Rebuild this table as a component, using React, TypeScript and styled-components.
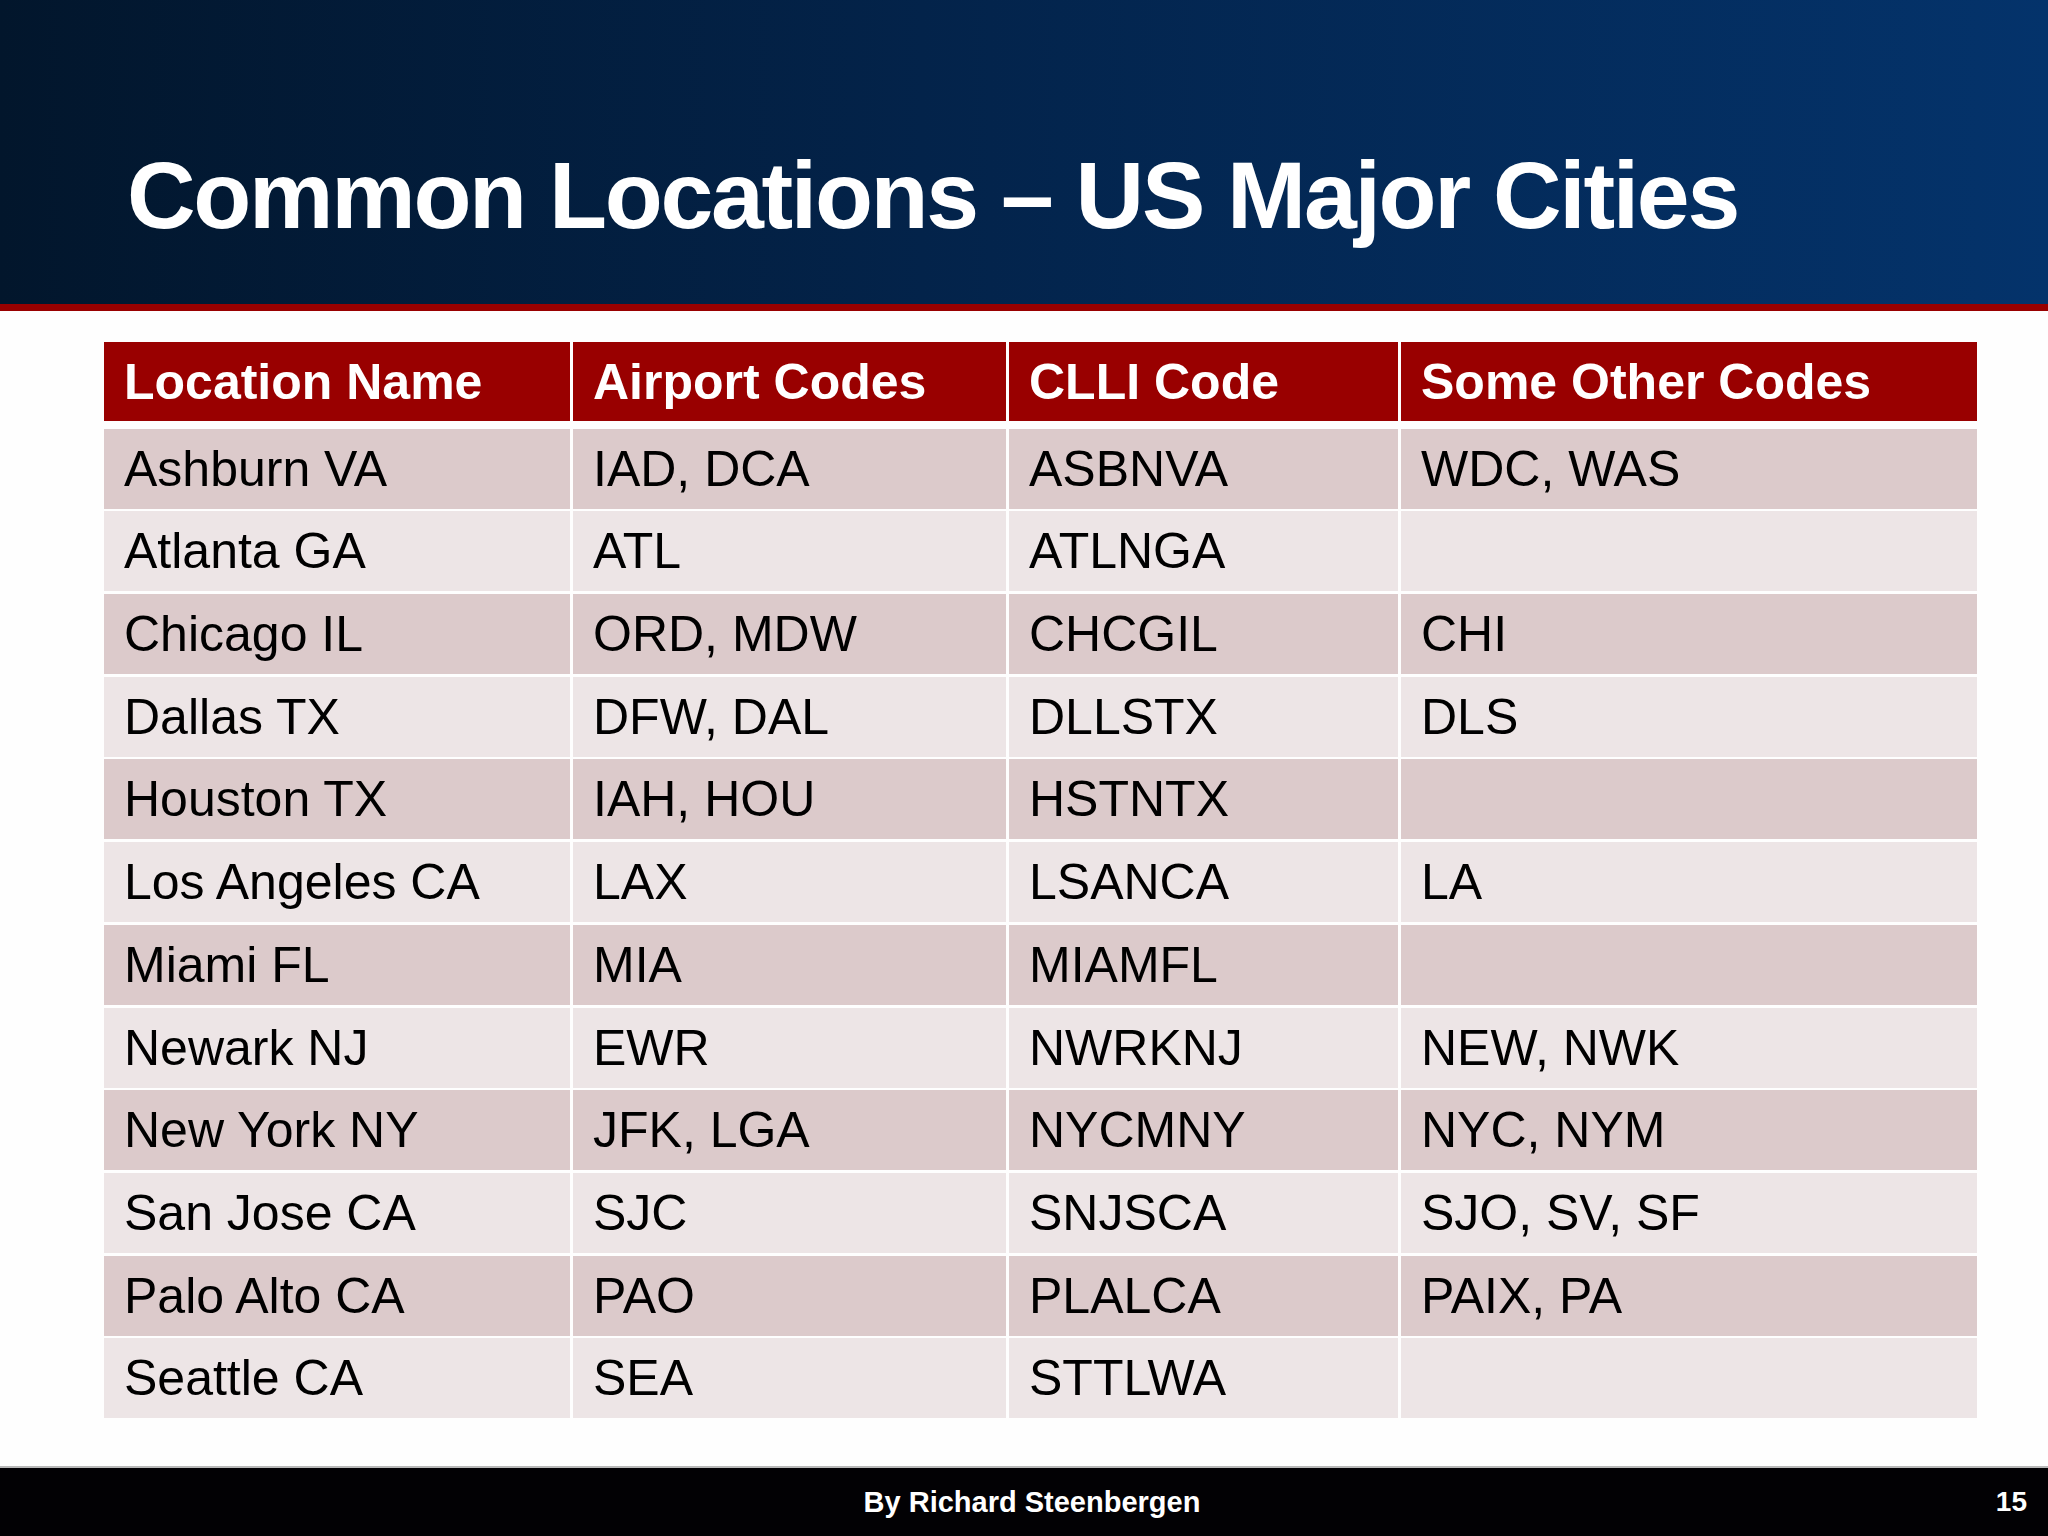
import { createGlobalStyle } from "styled-components"
import styled from "styled-components"

const GlobalStyle = createGlobalStyle`
  html, body {
    margin: 0;
    padding: 0;
    background: #ffffff;
  }
  body {
    font-family: "Liberation Sans", Arial, sans-serif;
  }
`

const Slide = styled.div`
  width: 2048px;
  height: 1536px;
  display: flex;
  flex-direction: column;
  background: #fefefe;
  overflow: hidden;
`

const TitleBar = styled.header`
  height: 311px;
  box-sizing: border-box;
  padding: 148px 0 0 127px;
  background: linear-gradient(90deg, #02162c 0%, #03234a 45%, #04336b 100%);
  border-bottom: 7px solid #990000;
`

const Title = styled.h1`
  margin: 0;
  font-size: 95px;
  line-height: 95px;
  font-weight: 700;
  color: #ffffff;
  letter-spacing: -2.3px;
`

const Body = styled.main`
  flex: 1;
  padding: 31px 71px 0 104px;
`

const Table = styled.div`
  display: grid;
  grid-template-columns: 466px 433px 389px 1fr;
  column-gap: 3px;
  row-gap: 2.7px;
`

const HeadRow = styled.div`
  display: contents;
`

const BodyRow = styled.div`
  display: contents;
`

const HeadCell = styled.div`
  height: 79px;
  margin-bottom: 5px;
  display: flex;
  align-items: center;
  padding-left: 20px;
  background: #990000;
  color: #ffffff;
  font-size: 50px;
  font-weight: 700;
`

const Cell = styled.div<{ $odd: boolean }>`
  height: 80px;
  display: flex;
  align-items: center;
  padding-left: 20px;
  background: ${(p) => (p.$odd ? "#dccacb" : "#ede5e6")};
  color: #000000;
  font-size: 50px;
  white-space: nowrap;
`

const Footer = styled.footer`
  height: 68px;
  border-top: 2px solid #b8b8b8;
  background: #020104;
  display: grid;
  grid-template-columns: 1fr auto 1fr;
  align-items: center;
  color: #ffffff;
  font-size: 29px;
  font-weight: 700;
`

const Byline = styled.div`
  grid-column: 2;
  padding-left: 16px;
`

const PageNumber = styled.div`
  grid-column: 3;
  justify-self: end;
  padding-right: 21px;
  font-size: 28px;
`

const headers = ["Location Name", "Airport Codes", "CLLI Code", "Some Other Codes"]

const rows: string[][] = [
  ["Ashburn VA", "IAD, DCA", "ASBNVA", "WDC, WAS"],
  ["Atlanta GA", "ATL", "ATLNGA", ""],
  ["Chicago IL", "ORD, MDW", "CHCGIL", "CHI"],
  ["Dallas TX", "DFW, DAL", "DLLSTX", "DLS"],
  ["Houston TX", "IAH, HOU", "HSTNTX", ""],
  ["Los Angeles CA", "LAX", "LSANCA", "LA"],
  ["Miami FL", "MIA", "MIAMFL", ""],
  ["Newark NJ", "EWR", "NWRKNJ", "NEW, NWK"],
  ["New York NY", "JFK, LGA", "NYCMNY", "NYC, NYM"],
  ["San Jose CA", "SJC", "SNJSCA", "SJO, SV, SF"],
  ["Palo Alto CA", "PAO", "PLALCA", "PAIX, PA"],
  ["Seattle CA", "SEA", "STTLWA", ""],
]

export default function App() {
  return (
    <>
      <GlobalStyle />
      <Slide>
        <TitleBar>
          <Title>Common Locations – US Major Cities</Title>
        </TitleBar>
        <Body>
          <Table>
            <HeadRow>
              {headers.map((h) => (
                <HeadCell key={h}>{h}</HeadCell>
              ))}
            </HeadRow>
            {rows.map((row, i) => (
              <BodyRow key={row[0]}>
                {row.map((cell, j) => (
                  <Cell key={j} $odd={i % 2 === 0}>
                    {cell}
                  </Cell>
                ))}
              </BodyRow>
            ))}
          </Table>
        </Body>
        <Footer>
          <Byline>By Richard Steenbergen</Byline>
          <PageNumber>15</PageNumber>
        </Footer>
      </Slide>
    </>
  )
}
